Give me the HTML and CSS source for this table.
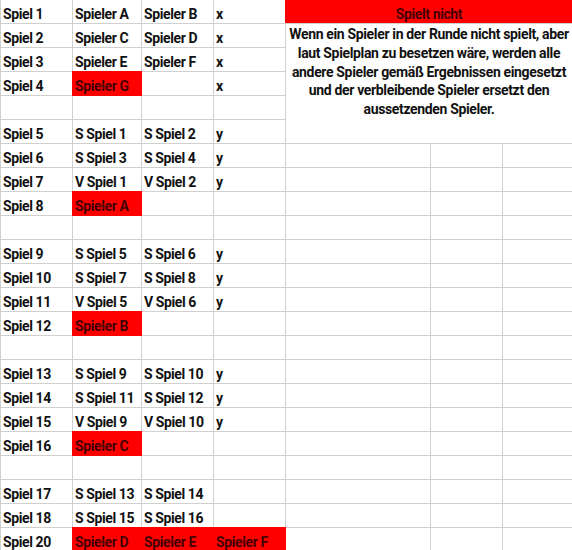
FILE: index.html
```html
<!DOCTYPE html>
<html lang="de">
<head>
<meta charset="utf-8">
<title>Spielplan</title>
<link rel="stylesheet" href="styles.css">
</head>
<body>
<div class="sheet">
  <div class="c">Spiel 1</div><div class="c">Spieler A</div><div class="c">Spieler B</div><div class="c">x</div>
  <div class="c head">Spielt nicht</div>
  <div class="c">Spiel 2</div><div class="c">Spieler C</div><div class="c">Spieler D</div><div class="c">x</div>
  <div class="c note">Wenn ein Spieler in der Runde nicht spielt, aber<br>laut Spielplan zu besetzen wäre, werden alle<br>andere Spieler gemäß Ergebnissen eingesetzt<br>und der verbleibende Spieler ersetzt den<br>aussetzenden Spieler.</div>
  <div class="c">Spiel 3</div><div class="c">Spieler E</div><div class="c">Spieler F</div><div class="c">x</div>
  <div class="c">Spiel 4</div><div class="c red">Spieler G</div><div class="c"></div><div class="c">x</div>
  <div class="c"></div><div class="c"></div><div class="c"></div><div class="c"></div>
  <div class="c">Spiel 5</div><div class="c">S Spiel 1</div><div class="c">S Spiel 2</div><div class="c">y</div>

  <div class="c">Spiel 6</div><div class="c">S Spiel 3</div><div class="c">S Spiel 4</div><div class="c">y</div><div class="c"></div><div class="c"></div><div class="c"></div>
  <div class="c">Spiel 7</div><div class="c">V Spiel 1</div><div class="c">V Spiel 2</div><div class="c">y</div><div class="c"></div><div class="c"></div><div class="c"></div>
  <div class="c">Spiel 8</div><div class="c red">Spieler A</div><div class="c"></div><div class="c"></div><div class="c"></div><div class="c"></div><div class="c"></div>
  <div class="c"></div><div class="c"></div><div class="c"></div><div class="c"></div><div class="c"></div><div class="c"></div><div class="c"></div>

  <div class="c">Spiel 9</div><div class="c">S Spiel 5</div><div class="c">S Spiel 6</div><div class="c">y</div><div class="c"></div><div class="c"></div><div class="c"></div>
  <div class="c">Spiel 10</div><div class="c">S Spiel 7</div><div class="c">S Spiel 8</div><div class="c">y</div><div class="c"></div><div class="c"></div><div class="c"></div>
  <div class="c">Spiel 11</div><div class="c">V Spiel 5</div><div class="c">V Spiel 6</div><div class="c">y</div><div class="c"></div><div class="c"></div><div class="c"></div>
  <div class="c">Spiel 12</div><div class="c red">Spieler B</div><div class="c"></div><div class="c"></div><div class="c"></div><div class="c"></div><div class="c"></div>
  <div class="c"></div><div class="c"></div><div class="c"></div><div class="c"></div><div class="c"></div><div class="c"></div><div class="c"></div>

  <div class="c">Spiel 13</div><div class="c">S Spiel 9</div><div class="c">S Spiel 10</div><div class="c">y</div><div class="c"></div><div class="c"></div><div class="c"></div>
  <div class="c">Spiel 14</div><div class="c">S Spiel 11</div><div class="c">S Spiel 12</div><div class="c">y</div><div class="c"></div><div class="c"></div><div class="c"></div>
  <div class="c">Spiel 15</div><div class="c">V Spiel 9</div><div class="c">V Spiel 10</div><div class="c">y</div><div class="c"></div><div class="c"></div><div class="c"></div>
  <div class="c">Spiel 16</div><div class="c red">Spieler C</div><div class="c"></div><div class="c"></div><div class="c"></div><div class="c"></div><div class="c"></div>
  <div class="c"></div><div class="c"></div><div class="c"></div><div class="c"></div><div class="c"></div><div class="c"></div><div class="c"></div>

  <div class="c">Spiel 17</div><div class="c">S Spiel 13</div><div class="c">S Spiel 14</div><div class="c"></div><div class="c"></div><div class="c"></div><div class="c"></div>
  <div class="c">Spiel 18</div><div class="c">S Spiel 15</div><div class="c">S Spiel 16</div><div class="c"></div><div class="c"></div><div class="c"></div><div class="c"></div>
  <div class="c">Spiel 20</div><div class="c red">Spieler D</div><div class="c red">Spieler E</div><div class="c red">Spieler F</div><div class="c"></div><div class="c"></div><div class="c"></div>
</div>
</body>
</html>
```
FILE: styles.css
```css
html, body {
  margin: 0;
  padding: 0;
  background: #ffffff;
}

.sheet {
  display: grid;
  grid-template-columns: 71px 68px 71px 71px 144px 71px 69px;
  grid-auto-rows: 23px;
  gap: 1px;
  padding-left: 1px;
  width: 571px;
  background: #d0d0d0;
  font-family: Roboto, "Liberation Sans", sans-serif;
  font-weight: 700;
  font-size: 14px;
  letter-spacing: -0.4px;
  color: #111111;
}

.c {
  background: #ffffff;
  padding: 6px 0 0 2px;
  line-height: 16px;
  white-space: nowrap;
  overflow: visible;
}

.red {
  background: #ff0000;
  color: #460000;
  box-shadow: 0 0 0 1px #ff0000;
}

.head {
  grid-column: 5 / 8;
  background: #ff0000;
  color: #460000;
  text-align: center;
  padding-left: 0;
  box-shadow: -1px 0 0 #ff0000;
}

.note {
  grid-column: 5 / 8;
  grid-row: 2 / 7;
  text-align: center;
  padding: 1px 0 0 0;
  line-height: 18.75px;
  letter-spacing: -0.35px;
}
```
